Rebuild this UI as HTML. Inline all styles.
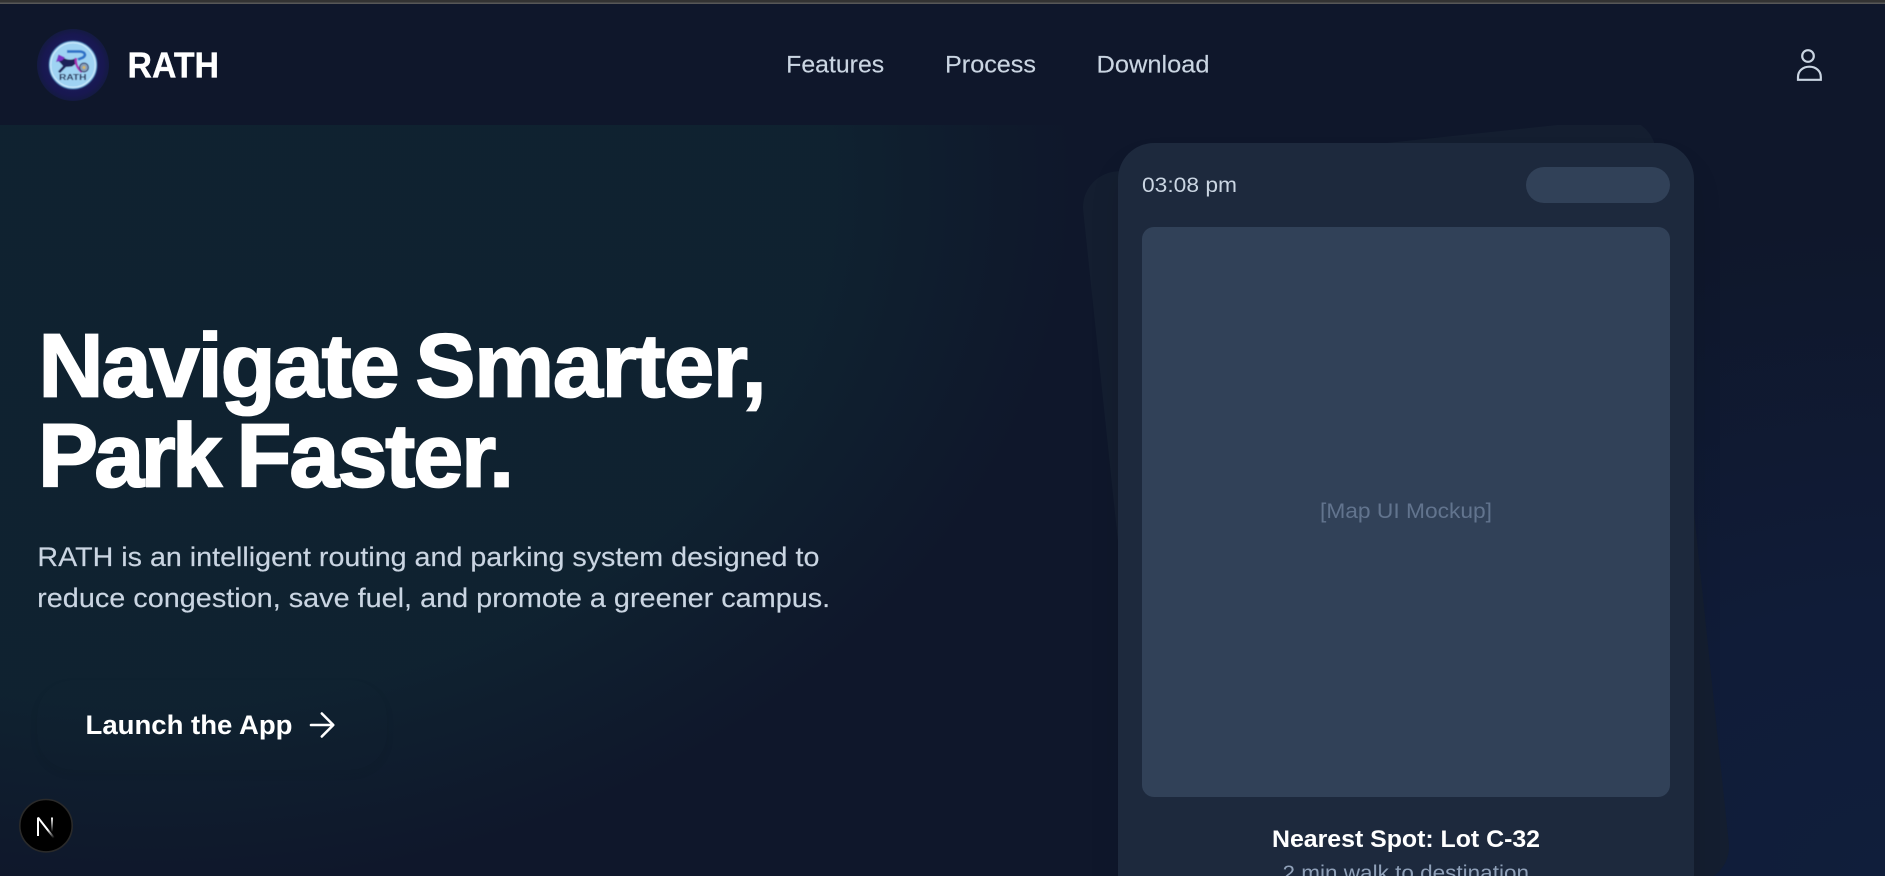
<!DOCTYPE html>
<html lang="en">
<head>
<meta charset="utf-8">
<title>RATH</title>
<style>
html,body{margin:0;padding:0;width:1885px;height:876px;overflow:hidden;background:#0f172b;font-family:"Liberation Sans",sans-serif}
.abs{position:absolute}
#top{left:0;top:0;width:1885px;height:4px;background:linear-gradient(#333 0,#333 65%,#575757 65%,#575757 100%)}
#hero{left:0;top:125px;width:1885px;height:751px;overflow:hidden;
background:
radial-gradient(ellipse 1050px 800px at 150px 60px,rgba(16,60,60,.3) 0,rgba(16,60,60,.3) 64%,rgba(16,60,60,0) 88%),
radial-gradient(ellipse 800px 650px at 1885px 751px,#101e3b 0,#101c38 40%,rgba(15,23,43,0) 100%),
#0f172b}
#back{left:1118px;top:18px;width:576px;height:768px;border-radius:36px;background:#141e30;transform:rotate(-6deg)}
#phone{left:1118px;top:18px;width:576px;height:768px;border-radius:36px;background:#1d293d;box-shadow:0 20px 30px rgba(0,0,0,.1)}
#pill{left:1526px;top:42px;width:144px;height:36px;border-radius:18px;background:#314158}
#map{left:1142px;top:102px;width:528px;height:570px;border-radius:12px;background:#314158}
#btn{left:37px;top:555px;width:350px;height:90px;border-radius:36px;background:rgba(18,36,50,.06);box-shadow:0 4px 8px rgba(10,20,30,.08)}
svg{position:absolute;left:0;top:0}
text{font-family:"Liberation Sans",sans-serif}
</style>
</head>
<body>
<div id="hero" class="abs">
  <div id="back" class="abs"></div>
  <div id="phone" class="abs"></div>
  <div id="pill" class="abs"></div>
  <div id="map" class="abs"></div>
  <div id="btn" class="abs"></div>
</div>
<div id="top" class="abs"></div>
<svg width="1885" height="876" viewBox="0 0 1885 876">
  <defs>
    <radialGradient id="halo"><stop offset="0" stop-color="#1e1e6c"/><stop offset=".85" stop-color="#181850"/><stop offset="1" stop-color="#141a42"/></radialGradient>
    <linearGradient id="nd" gradientUnits="userSpaceOnUse" x1="38" y1="817" x2="54" y2="838"><stop offset="0" stop-color="#fff"/><stop offset=".6" stop-color="#fff"/><stop offset="1" stop-color="#fff" stop-opacity="0"/></linearGradient>
    <linearGradient id="nr" gradientUnits="userSpaceOnUse" x1="52" y1="817" x2="52" y2="832"><stop offset="0" stop-color="#fff"/><stop offset="1" stop-color="#fff" stop-opacity="0"/></linearGradient>
    <filter id="soft" x="-10%" y="-10%" width="120%" height="120%"><feGaussianBlur stdDeviation=".45"/></filter>
  </defs>

  <!-- logo -->
  <circle cx="73" cy="65" r="36" fill="url(#halo)"/>
  <g filter="url(#soft)">
    <circle cx="73" cy="65" r="24" fill="#9fd3f3" stroke="#3a6aa0" stroke-width="1"/>
    <circle cx="73" cy="65" r="22.2" fill="none" stroke="#d8f0ff" stroke-width=".8"/>
    <path d="M67 51.5h12c6 0 7.5 3.5 4 6l-5 2" fill="none" stroke="#2f72c8" stroke-width="2.8"/>
    <path d="M57 60l3-3 5 1.5c3 1.5 7 1.5 10 0l1 5-4 3-6 .5-6 6-2-1.500 5-5.500-3-3.500z" fill="#1b2058"/>
    <path d="M56 62l2.500-7.500 6.500 3-3 3z" fill="#7a2ec0"/>
    <path d="M76 58c-1 6 2 11 6 14" fill="none" stroke="#a833b5" stroke-width="2.4"/>
    <circle cx="84" cy="67.500" r="4.400" fill="#8aa0b8" stroke="#26356a" stroke-width="1.100"/>
    <circle cx="84" cy="67.500" r="1.500" fill="#d8b860"/>
    <text x="59" y="80" font-size="7.800" font-weight="700" fill="#16224f" textLength="27.500" lengthAdjust="spacingAndGlyphs">RATH</text>
  </g>

  <text x="127.500" y="77.500" font-size="36" font-weight="700" fill="#fff" stroke="#fff" stroke-width=".35" textLength="91.500" lengthAdjust="spacingAndGlyphs">RATH</text>

  <!-- nav -->
  <g fill="#cad5e2" stroke="#cad5e2" stroke-width=".15" font-size="24">
    <text x="786.200" y="72.700" textLength="98" lengthAdjust="spacingAndGlyphs">Features</text>
    <text x="945" y="72.700" textLength="91" lengthAdjust="spacingAndGlyphs">Process</text>
    <text x="1096.500" y="72.700" textLength="113" lengthAdjust="spacingAndGlyphs">Download</text>
  </g>

  <!-- user icon -->
  <circle cx="1808" cy="56" r="5.800" fill="none" stroke="#cad5e2" stroke-width="2.200"/>
  <path d="M1798 79.800V77c0-6 5-10.300 11.400-10.300S1820.800 71 1820.800 77v2.800z" fill="none" stroke="#cad5e2" stroke-width="2.200"/>

  <!-- hero copy -->
  <g font-size="90" font-weight="700" fill="#fff" stroke="#fff" stroke-width="1.800">
    <text x="38.500" y="396.700" textLength="361.200" lengthAdjust="spacing">Navigate</text>
    <text x="415.400" y="396.700" textLength="351.300" lengthAdjust="spacing">Smarter,</text>
    <text x="38" y="486.700" textLength="184" lengthAdjust="spacing">Park</text>
    <text x="236.500" y="486.700" textLength="277.600" lengthAdjust="spacing">Faster.</text>
  </g>
  <g fill="#cad5e2" stroke="#cad5e2" stroke-width=".15" font-size="26.400">
    <text x="37.400" y="566" textLength="782" lengthAdjust="spacingAndGlyphs">RATH is an intelligent routing and parking system designed to</text>
    <text x="37.200" y="607" textLength="793" lengthAdjust="spacingAndGlyphs">reduce congestion, save fuel, and promote a greener campus.</text>
  </g>

  <!-- button -->
  <text x="85.500" y="734" font-size="26.400" font-weight="700" fill="#fff" textLength="207" lengthAdjust="spacingAndGlyphs">Launch the App</text>
  <path d="M311 725h22M321.800 713.500L333.300 725 321.800 736.500" fill="none" stroke="#fff" stroke-width="2.600" stroke-linecap="round" stroke-linejoin="round"/>

  <!-- next badge -->
  <circle cx="46" cy="825.700" r="26.200" fill="#000" stroke="#2a2a2a" stroke-width="1.600"/>
  <path d="M38 836V817.500" fill="none" stroke="#fff" stroke-width="2"/>
  <path d="M38 817.500L54 838" fill="none" stroke="url(#nd)" stroke-width="2"/>
  <path d="M52 817.500V832" fill="none" stroke="url(#nr)" stroke-width="2"/>

  <!-- phone text -->
  <text x="1142" y="191.800" font-size="21.600" fill="#cad5e2" textLength="95" lengthAdjust="spacingAndGlyphs">03:08 pm</text>
  <text x="1320" y="518" font-size="21.600" fill="#62748e" textLength="172" lengthAdjust="spacingAndGlyphs">[Map UI Mockup]</text>
  <text x="1272" y="847" font-size="24" font-weight="700" fill="#fff" textLength="268" lengthAdjust="spacingAndGlyphs">Nearest Spot: Lot C-32</text>
  <text x="1282.500" y="880" font-size="21.600" fill="#90a1b9" textLength="246.500" lengthAdjust="spacingAndGlyphs">2 min walk to destination</text>
</svg>
</body>
</html>
